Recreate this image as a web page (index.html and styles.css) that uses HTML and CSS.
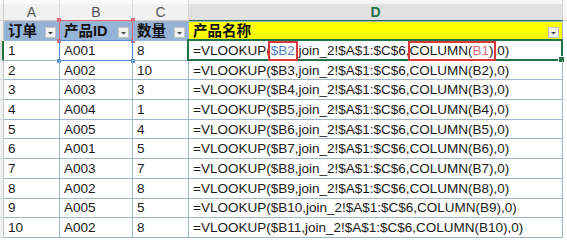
FILE: index.html
```html
<!DOCTYPE html>
<html>
<head>
<meta charset="utf-8">
<link rel="stylesheet" href="styles.css">
</head>
<body>
<div class="sheet">
  <div class="ch stub"></div>
  <div class="ch">A</div>
  <div class="ch">B</div>
  <div class="ch">C</div>
  <div class="ch sel">D</div>
  <div class="ch tail"></div>

  <div class="rh"></div>
  <div class="c hd fill-blue"><span>订单</span><svg class="dd" width="11" height="11" viewBox="0 0 11 11"><rect x="0.5" y="0.5" width="10" height="10" fill="#f3f3f3" stroke="#c4c4c4"/><path d="M3 5h5l-2.5 2.5z" fill="#444"/></svg></div>
  <div class="c hd fill-blue"><span>产品ID</span><svg class="dd" width="11" height="11" viewBox="0 0 11 11"><rect x="0.5" y="0.5" width="10" height="10" fill="#f3f3f3" stroke="#c4c4c4"/><path d="M3 5h5l-2.5 2.5z" fill="#444"/></svg><b class="ref ref-red"></b><b class="hnd h-red tl"></b><b class="hnd h-red tr"></b><b class="hnd h-red bl"></b><b class="hnd h-red br"></b></div>
  <div class="c hd fill-blue"><span>数量</span><svg class="dd" width="11" height="11" viewBox="0 0 11 11"><rect x="0.5" y="0.5" width="10" height="10" fill="#f3f3f3" stroke="#c4c4c4"/><path d="M3 5h5l-2.5 2.5z" fill="#444"/></svg></div>
  <div class="c hd fill-yellow"><span>产品名称</span><svg class="dd" width="11" height="11" viewBox="0 0 11 11"><rect x="0.5" y="0.5" width="10" height="10" fill="#f3f3f3" stroke="#c4c4c4"/><path d="M3 5h5l-2.5 2.5z" fill="#444"/></svg></div>
  <div class="tail"></div>

  <div class="rh cur"></div>
  <div class="c">1</div>
  <div class="c">A001<b class="ref ref-blue"></b><b class="hnd h-blue bl"></b><b class="hnd h-blue br"></b></div>
  <div class="c">8</div>
  <div class="c active">=VLOOKUP(<span class="box"><span class="rb">$B2</span>,</span>join_2!$A$1:$C$6,<span class="box wide">COLUMN(<span class="rr">B1</span>),</span>0)<b class="fill"></b></div>
  <div class="tail"></div>

  <div class="rh"></div><div class="c">2</div><div class="c">A002</div><div class="c">10</div><div class="c">=VLOOKUP($B3,join_2!$A$1:$C$6,COLUMN(B2),0)</div><div class="tail"></div>
  <div class="rh"></div><div class="c">3</div><div class="c">A003</div><div class="c">3</div><div class="c">=VLOOKUP($B4,join_2!$A$1:$C$6,COLUMN(B3),0)</div><div class="tail"></div>
  <div class="rh"></div><div class="c">4</div><div class="c">A004</div><div class="c">1</div><div class="c">=VLOOKUP($B5,join_2!$A$1:$C$6,COLUMN(B4),0)</div><div class="tail"></div>
  <div class="rh"></div><div class="c">5</div><div class="c">A005</div><div class="c">4</div><div class="c">=VLOOKUP($B6,join_2!$A$1:$C$6,COLUMN(B5),0)</div><div class="tail"></div>
  <div class="rh"></div><div class="c">6</div><div class="c">A001</div><div class="c">5</div><div class="c">=VLOOKUP($B7,join_2!$A$1:$C$6,COLUMN(B6),0)</div><div class="tail"></div>
  <div class="rh"></div><div class="c">7</div><div class="c">A003</div><div class="c">7</div><div class="c">=VLOOKUP($B8,join_2!$A$1:$C$6,COLUMN(B7),0)</div><div class="tail"></div>
  <div class="rh"></div><div class="c">8</div><div class="c">A002</div><div class="c">8</div><div class="c">=VLOOKUP($B9,join_2!$A$1:$C$6,COLUMN(B8),0)</div><div class="tail"></div>
  <div class="rh"></div><div class="c">9</div><div class="c">A005</div><div class="c">5</div><div class="c">=VLOOKUP($B10,join_2!$A$1:$C$6,COLUMN(B9),0)</div><div class="tail"></div>
  <div class="rh"></div><div class="c">10</div><div class="c">A002</div><div class="c">8</div><div class="c">=VLOOKUP($B11,join_2!$A$1:$C$6,COLUMN(B10),0)</div><div class="tail"></div>
</div>
</body>
</html>
```
FILE: styles.css
```css
html, body {
  margin: 0;
  padding: 0;
  background: #ffffff;
}

.sheet {
  display: grid;
  grid-template-columns: 4px 56px 73px 56px 374px 4px;
  grid-template-rows: 21px 20px repeat(10, 19.7px);
  font-family: "Liberation Sans", Arial, "Noto Sans CJK SC", sans-serif;
  width: 567px;
}

.ch {
  box-sizing: border-box;
  background: linear-gradient(#fafafa 0 4px, #f1f1f1 4px);
  border-right: 1px solid #d6d6d6;
  border-bottom: 1px solid #c9c9c9;
  display: flex;
  align-items: center;
  justify-content: center;
  padding-top: 4px;
  color: #555555;
  font-size: 14px;
}

.ch.stub {
  border-right-color: #cfcfcf;
}

.ch.sel {
  background: linear-gradient(#f6f6f6 0 4px, #e1e1e1 4px);
  color: #217346;
  font-weight: bold;
  border-bottom: 1px solid #217346;
}

.ch.tail {
  background: #f7f7f7;
  border-right: none;
}

.tail {
  background: #ffffff;
}

.rh {
  box-sizing: border-box;
  background: #f1f1f1;
  border-right: 1px solid #c6c6c6;
  border-bottom: 1px solid #d8d8d8;
}

.rh.cur {
  border-right: 2px solid #217346;
  background: #e1e1e1;
}

.c {
  position: relative;
  box-sizing: border-box;
  display: flex;
  align-items: center;
  padding-left: 4px;
  border-right: 1px solid #9fb4cd;
  border-bottom: 1px solid #9fb4cd;
  font-size: 13.5px;
  color: #1a1a1a;
  white-space: nowrap;
}

.hd {
  justify-content: space-between;
  padding-right: 3px;
  font-family: "Liberation Sans", "Noto Sans CJK SC", sans-serif;
  font-weight: bold;
  font-size: 14.5px;
  color: #111111;
  border-top: 1px solid #9fb4cd;
}

.hd span {
  line-height: 1;
}

.fill-blue {
  background: #95b3d7;
}

.fill-yellow {
  background: #ffff00;
}

.dd {
  flex: none;
  margin-top: 2px;
}

/* formula reference highlights */
.ref {
  position: absolute;
  border: 1px solid;
  pointer-events: none;
}

.ref-red {
  border-color: #e0687d;
  inset: -2px -1px -1px -1px;
}

.ref-blue {
  border-color: #5b8fd6;
  inset: -1px -1px -1px -1px;
}

.hnd {
  position: absolute;
  width: 4px;
  height: 4px;
}

.h-red { background: #e0687d; }
.h-blue { background: #5b8fd6; }

.hnd.tl { left: -3px; top: -4px; }
.hnd.tr { right: -3px; top: -4px; }
.hnd.bl { left: -3px; bottom: -3px; }
.hnd.br { right: -3px; bottom: -3px; }

/* selected cell */
.active::before {
  content: "";
  position: absolute;
  inset: -2px -1px -1px -2px;
  border: 2px solid #217346;
}

.fill {
  position: absolute;
  right: -3px;
  bottom: -3px;
  width: 5px;
  height: 5px;
  background: #217346;
  border: 1px solid #ffffff;
}

.box {
  position: relative;
}

.box::after {
  content: "";
  position: absolute;
  left: -3px;
  right: 0;
  top: -2px;
  bottom: -3px;
  border: 2px solid #d8393d;
}

.box.wide::after {
  left: -2px;
  right: 1px;
}

.rb {
  color: #4f81c7;
}

.rr {
  color: #d66f7d;
}
```
